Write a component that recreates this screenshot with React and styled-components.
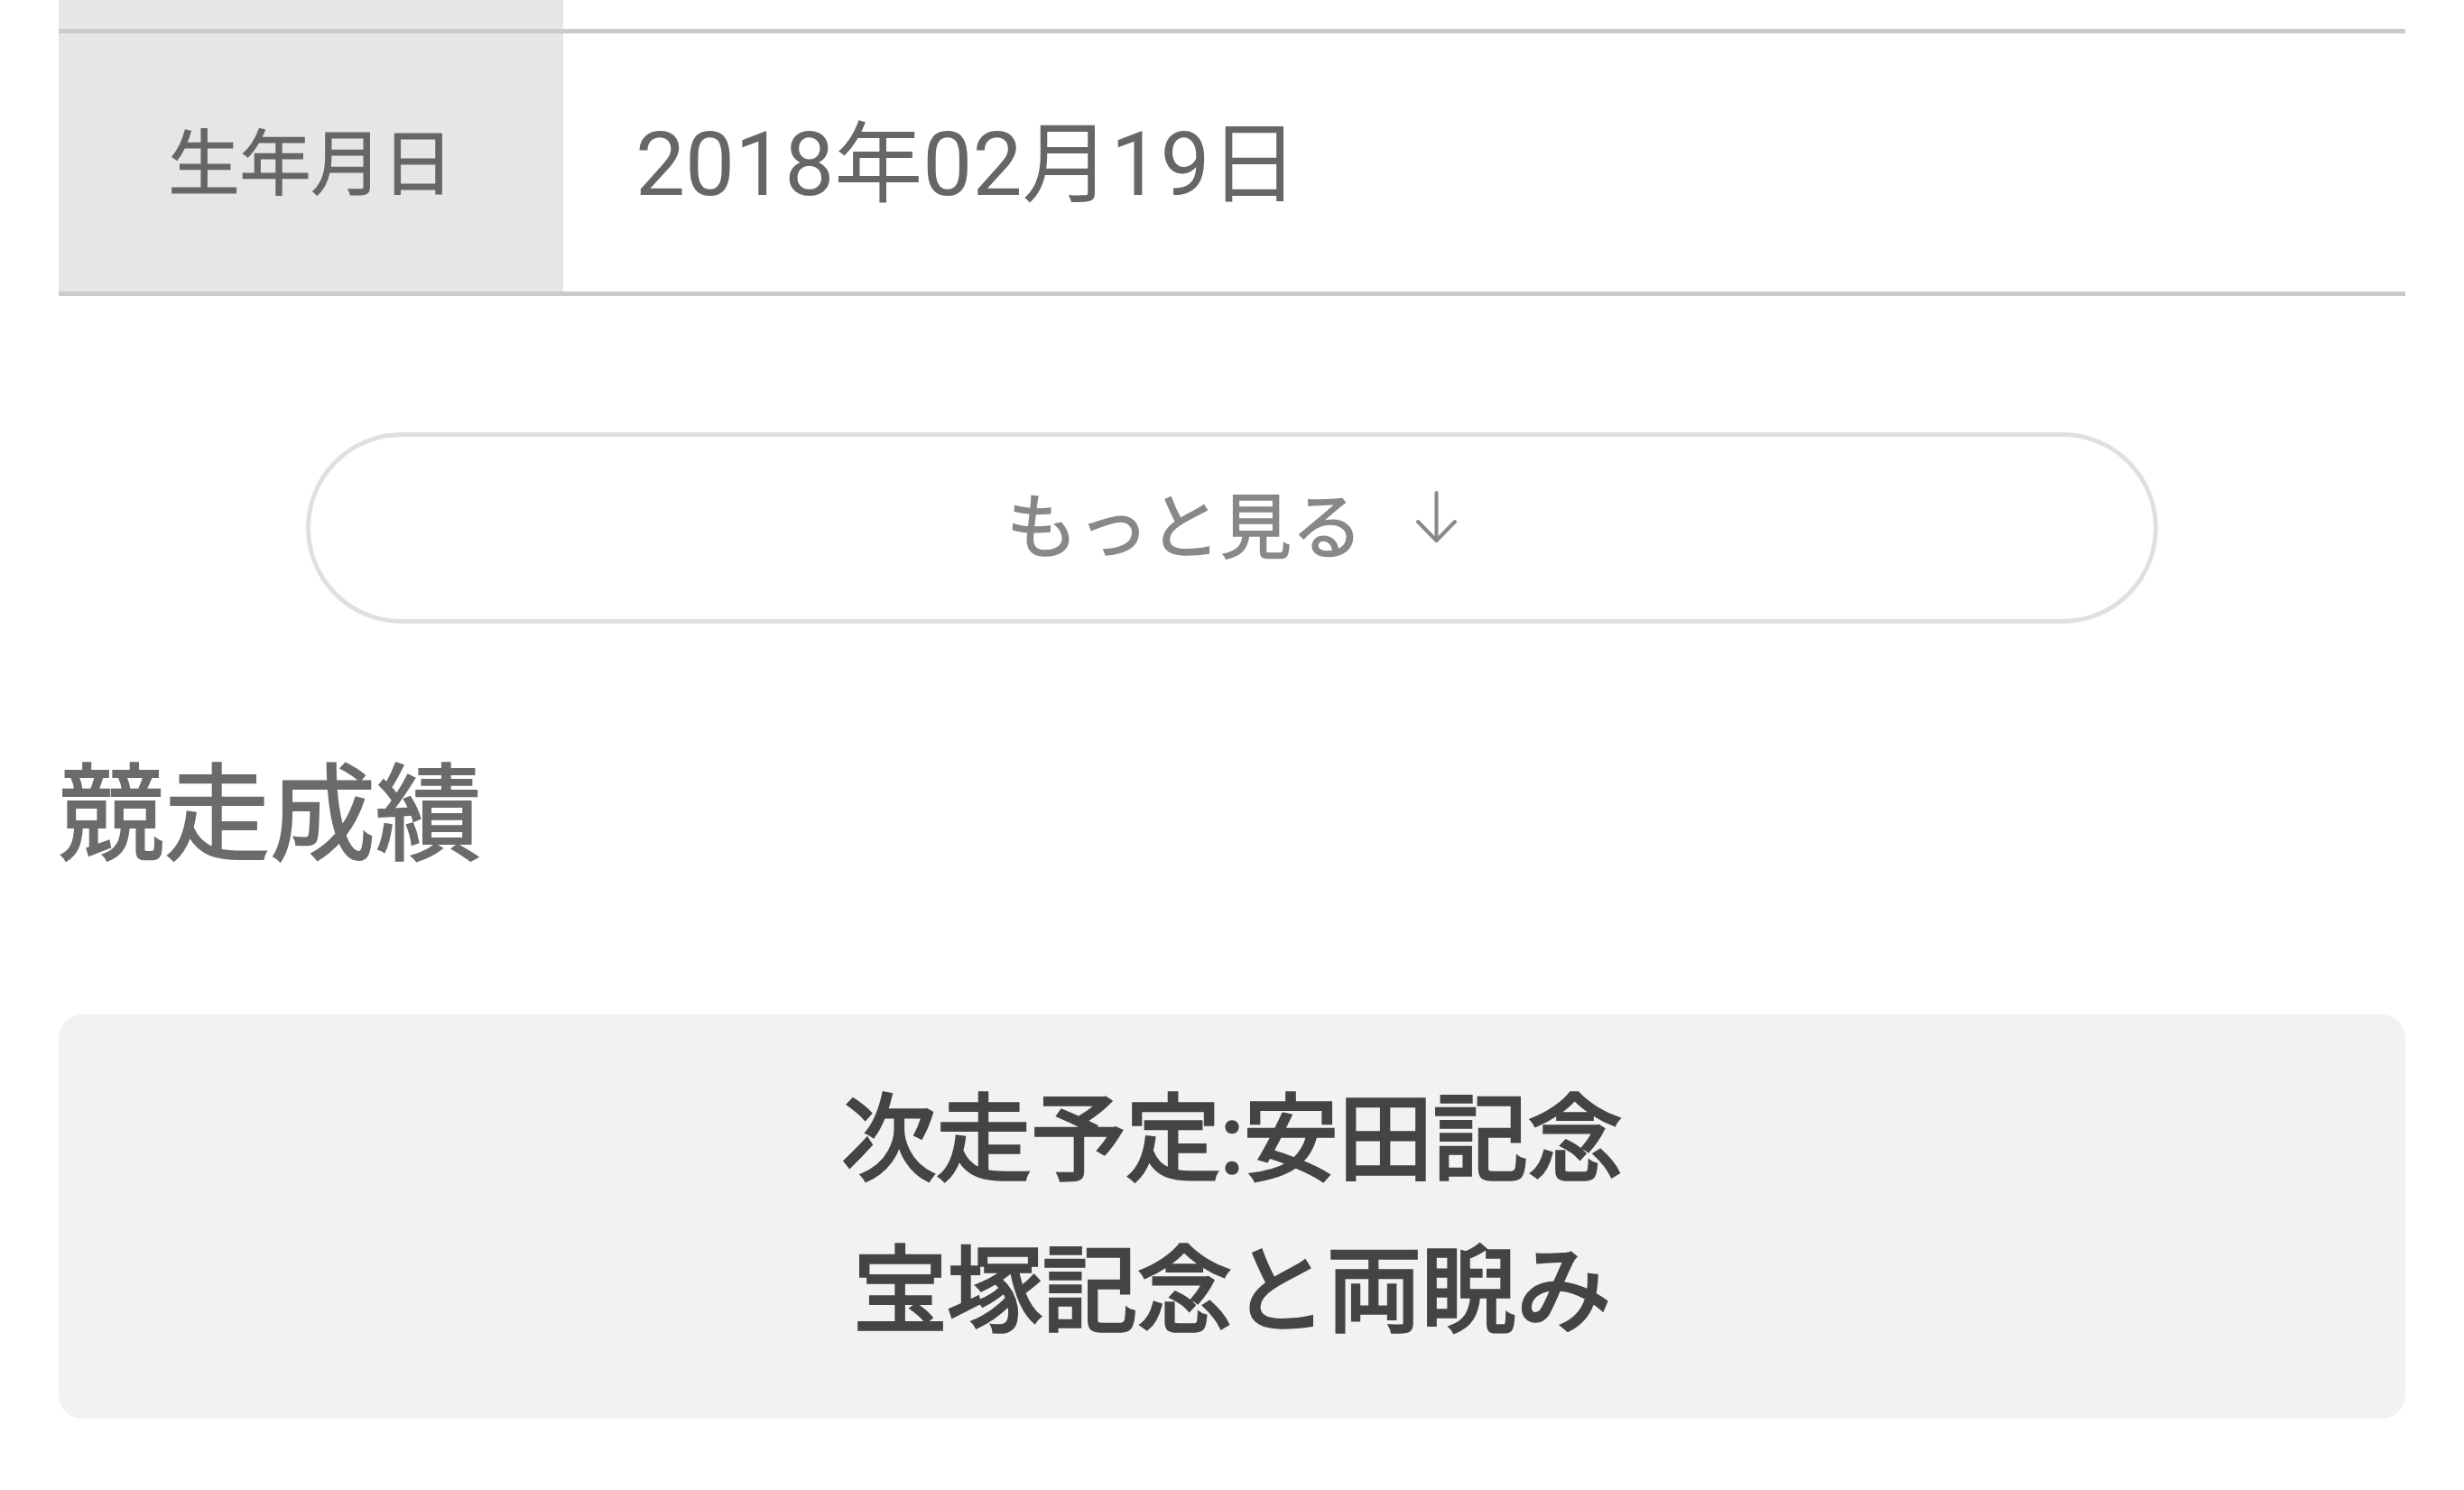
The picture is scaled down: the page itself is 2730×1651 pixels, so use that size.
import React from 'react'
import styled, { createGlobalStyle } from 'styled-components'

const GlobalStyle = createGlobalStyle`
  html, body {
    margin: 0;
    padding: 0;
    background: #ffffff;
  }
  body {
    font-family: Roboto, "Noto Sans CJK JP", sans-serif;
  }
`

const Page = styled.div`
  padding: 0 65px 80px;
`

const Table = styled.div`
  display: flex;
  flex-direction: column;
`

const Row = styled.div`
  display: grid;
  grid-template-columns: 559px 1fr;
  height: ${props => props.height}px;
  border-bottom: 5px solid #cbcbcb;
`

const Label = styled.div`
  background: #e6e6e6;
  display: flex;
  align-items: center;
  justify-content: center;
  padding-bottom: 10px;
  font-size: 79px;
  color: #666666;
  -webkit-text-stroke: 1.2px #666666;
`

const Value = styled.div`
  display: flex;
  align-items: center;
  padding: 0 0 14px 80px;
  font-size: 98px;
  color: #666666;
`

const MoreButton = styled.button`
  display: flex;
  align-items: center;
  justify-content: center;
  box-sizing: border-box;
  width: 2052px;
  height: 212px;
  margin: 151px auto 0;
  padding: 0 0 14px;
  border: 5px solid #e0e0e0;
  border-radius: 106px;
  background: #ffffff;
  font-family: Roboto, "Noto Sans CJK JP", sans-serif;
  font-size: 79px;
  color: #888888;
  -webkit-text-stroke: 1.4px #888888;
`

const ArrowIcon = styled.svg`
  margin-left: 58px;
  margin-bottom: 10px;
`

const Heading = styled.h2`
  margin: 143px 0 0;
  font-size: 117px;
  line-height: 140px;
  font-weight: 400;
  color: #6b6b6b;
  -webkit-text-stroke: 2px #6b6b6b;
`

const NoticeCard = styled.div`
  margin-top: 150px;
  padding: 56px 40px;
  background: #f2f2f2;
  border-radius: 26px;
  text-align: center;
  font-size: 105px;
  line-height: 168px;
  font-weight: 400;
  color: #444444;
  -webkit-text-stroke: 3.4px #444444;
`

const DownArrow = () => (
  <ArrowIcon width="47" height="58" viewBox="0 0 47 58" fill="none">
    <path d="M23.5 2 V55" stroke="#888888" strokeWidth="4" strokeLinecap="round" />
    <path d="M3 34 L23.5 55 L44 34" stroke="#888888" strokeWidth="4" strokeLinecap="round" strokeLinejoin="round" />
  </ArrowIcon>
)

const App = () => (
  <Page>
    <GlobalStyle />
    <Table>
      <Row height={32}>
        <Label />
        <Value />
      </Row>
      <Row height={286}>
        <Label>生年月日</Label>
        <Value>2018年02月19日</Value>
      </Row>
    </Table>
    <MoreButton>
      もっと見る
      <DownArrow />
    </MoreButton>
    <Heading>競走成績</Heading>
    <NoticeCard>
      次走予定:安田記念
      <br />
      宝塚記念と両睨み
    </NoticeCard>
  </Page>
)

export default App
